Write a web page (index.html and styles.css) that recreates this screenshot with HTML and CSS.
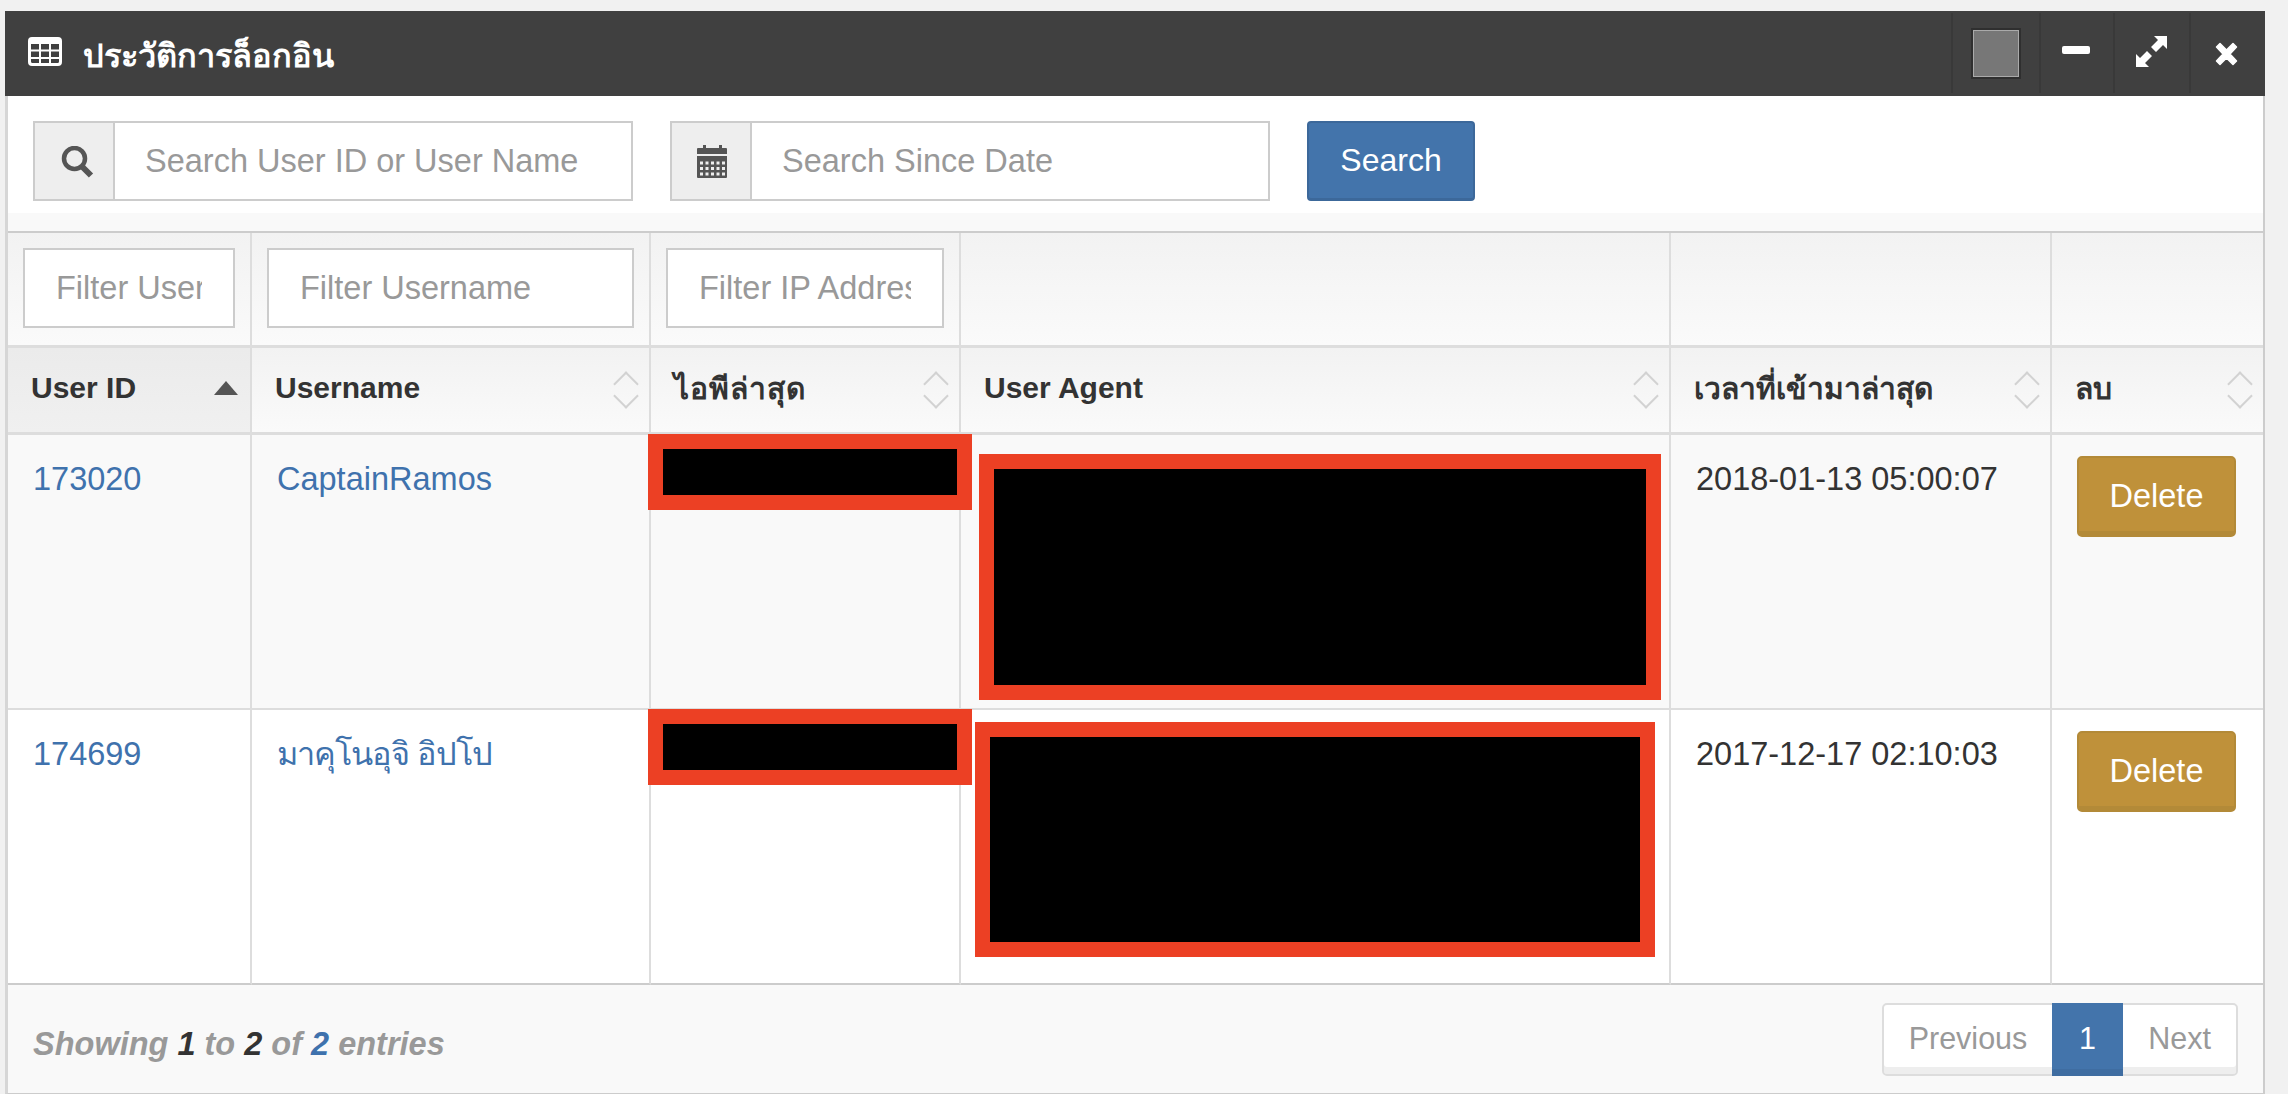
FILE: index.html
```html
<!DOCTYPE html>
<html lang="th">
<head>
<meta charset="utf-8">
<title>ประวัติการล็อกอิน</title>
<link rel="stylesheet" href="styles.css">
</head>
<body>
<section class="window">
  <header class="titlebar">
    <svg class="ico-table" viewBox="0 0 34 29"><path fill-rule="evenodd" fill="#fff" d="M4 0h26a4 4 0 0 1 4 4v21a4 4 0 0 1-4 4H4a4 4 0 0 1-4-4V4a4 4 0 0 1 4-4zM3 7v5.500h8V7zM13 7v5.500h8V7zM23 7v5.500h8V7zM3 14.500V20h8v-5.500zM13 14.500V20h8v-5.500zM23 14.500V20h8v-5.500zM3 22v2.500A1.500 1.500 0 0 0 4.500 26H11v-4zM13 22v4h8v-4zM23 22v4h6.500a1.500 1.500 0 0 0 1.500-1.500V22z"/></svg>
    <h1 class="title">ประวัติการล็อกอิน</h1>
    <div class="tools">
      <div class="tool tool-color"><span class="swatch"></span></div>
      <div class="tool tool-min"><span class="minus"></span></div>
      <div class="tool tool-exp"><svg class="ico-expand" viewBox="0 0 31 31"><path fill="#fff" d="M18 0H31V13L27 9 20 16 15 11 22 4ZM13 31H0V18L4 22 11 15 16 20 9 27Z"/></svg></div>
      <div class="tool tool-close"><svg class="ico-close" viewBox="0 0 23 24"><path fill="#fff" stroke="#fff" stroke-width="1.500" stroke-linejoin="round" d="M5 1.500 11.500 8 18 1.500 21.500 5 15 12 21.500 19 18 22.500 11.500 16 5 22.500 1.500 19 8 12 1.500 5Z"/></svg></div>
    </div>
  </header>
  <div class="panel">
    <form class="searchbar">
      <div class="group group-user">
        <span class="addon"><svg class="ico-search" viewBox="0 0 34 34"><circle cx="13.500" cy="12.500" r="10.500" fill="none" stroke="#555" stroke-width="4.500"/><path d="M21 20.500l9 9" fill="none" stroke="#555" stroke-width="6"/></svg></span>
        <input class="field" type="text" placeholder="Search User ID or User Name">
      </div>
      <div class="group group-date">
        <span class="addon"><svg class="ico-cal" viewBox="0 0 30 33"><path fill="#555" d="M6 0h3v3h13V0h3v3h4a1 1 0 0 1 1 1v5H0V4a1 1 0 0 1 1-1h5zM0 11h30v21a1 1 0 0 1-1 1H1a1 1 0 0 1-1-1z"/><path fill="#eee" d="M3 16.500h3v3H3zM8.500 16.500h3v3h-3zM14 16.500h3v3h-3zM19.500 16.500h3v3h-3zM25 16.500h3v3h-3zM3 22h3v3H3zM8.500 22h3v3h-3zM14 22h3v3h-3zM19.500 22h3v3h-3zM25 22h3v3h-3zM3 27.500h3v3H3zM8.500 27.500h3v3h-3zM14 27.500h3v3h-3zM19.500 27.500h3v3h-3zM25 27.500h3v3h-3z"/></svg></span>
        <input class="field" type="text" placeholder="Search Since Date">
      </div>
      <button class="btn btn-search" type="button">Search</button>
    </form>
    <div class="tablewrap">
    <table class="grid">
      <colgroup>
        <col class="c1"><col class="c2"><col class="c3"><col class="c4"><col class="c5"><col class="c6">
      </colgroup>
      <thead>
        <tr class="filters">
          <th><input class="filter" type="text" placeholder="Filter User ID"></th>
          <th><input class="filter" type="text" placeholder="Filter Username"></th>
          <th><input class="filter" type="text" placeholder="Filter IP Address"></th>
          <th></th><th></th><th></th>
        </tr>
        <tr class="heads">
          <th class="sorted"><span>User ID</span><i class="sort-asc"></i></th>
          <th><span>Username</span><i class="sort"></i></th>
          <th><span class="th-wide">ไอพีล่าสุด</span><i class="sort"></i></th>
          <th><span>User Agent</span><i class="sort"></i></th>
          <th><span>เวลาที่เข้ามาล่าสุด</span><i class="sort"></i></th>
          <th><span>ลบ</span><i class="sort"></i></th>
        </tr>
      </thead>
      <tbody>
        <tr class="odd">
          <td><a href="#">173020</a></td>
          <td><a href="#">CaptainRamos</a></td>
          <td class="hold"><div class="redact r-ip1"></div></td>
          <td class="hold"><div class="redact r-ua1"></div></td>
          <td>2018-01-13 05:00:07</td>
          <td class="act"><button class="btn btn-del" type="button">Delete</button></td>
        </tr>
        <tr>
          <td><a href="#">174699</a></td>
          <td><a class="th-name" href="#">มาคุโนอุจิ อิปโป</a></td>
          <td class="hold"><div class="redact r-ip2"></div></td>
          <td class="hold"><div class="redact r-ua2"></div></td>
          <td>2017-12-17 02:10:03</td>
          <td class="act"><button class="btn btn-del" type="button">Delete</button></td>
        </tr>
      </tbody>
    </table>
    </div>
    <footer class="foot">
      <p class="info">Showing <b>1</b> to <b>2</b> of <b class="blue">2</b> entries</p>
      <nav class="pager">
        <a class="pg pg-prev" href="#">Previous</a>
        <a class="pg pg-on" href="#">1</a>
        <a class="pg pg-next" href="#">Next</a>
      </nav>
    </footer>
  </div>
</section>
</body>
</html>
```
FILE: styles.css
```css
* { box-sizing: border-box; }
html, body { height: 100%; }
body {
  margin: 0;
  overflow: hidden;
  background: #f1f1f1;
  color: #333;
  font-family: "Liberation Sans", "Noto Sans", sans-serif;
  font-size: 32.5px;
}
.window { margin: 11px 23px 0 5px; }

/* title bar */
.titlebar {
  height: 85px;
  background: #404040;
  display: flex;
  align-items: center;
  color: #fff;
}
.ico-table { width: 34px; height: 29px; margin: 0 21px 0 23px; position: relative; top: -2px; flex: none; }
.title { margin: 0; font-size: 32.5px; font-weight: bold; line-height: 1; position: relative; top: 3px; }
.tools { margin-left: auto; display: flex; height: 80px; align-self: flex-start; margin-top: 2px; }
.tool { border-left: 2px solid #393939; display: flex; align-items: center; justify-content: center; }
.tool-color { width: 88px; }
.tool-min { width: 74px; }
.tool-exp { width: 76px; }
.tool-close { width: 76px; }
.swatch { width: 48px; height: 49px; background: #777; border: 2px solid #aaa; outline: 2px solid #2f2f2f; outline-offset: -1px; }
.minus { width: 28px; height: 8px; background: #fff; border-radius: 2px; position: relative; top: -3px; left: -1px; }
.ico-expand { width: 31px; height: 31px; position: relative; top: -2px; left: -1px; }
.ico-close { width: 23px; height: 24px; position: relative; top: 1px; left: -2px; }

.panel {
  background: #fff;
  border-left: 3px solid #d6d6d6;
  border-right: 2px solid #ccc;
  border-bottom: 1px solid #ccc;
  height: 998px;
  display: flex;
  flex-direction: column;
}

/* search */
.searchbar { display: flex; gap: 37px; padding: 25px 0 12px 25px; flex: none; }
.group { display: flex; height: 80px; border: 2px solid #ccc; }
.group-user { width: 600px; }
.group-date { width: 600px; }
.addon { width: 80px; flex: none; background: #eee; border-right: 2px solid #ccc; display: flex; align-items: center; justify-content: center; }
.ico-search { width: 34px; height: 34px; margin: 4px 0 0 7px; }
.ico-cal { width: 30px; height: 33px; margin-left: 2px; }
.field {
  flex: 1;
  min-width: 0;
  border: 0;
  padding: 0 30px;
  font: inherit;
  color: #333;
  background: #fff;
  outline: none;
}
::placeholder { color: #999; opacity: 1; }

.btn { font: inherit; color: #fff; cursor: pointer; padding: 0; }
.btn-search { width: 168px; height: 80px; font-size: 32px; background: #4374ab; border: 2px solid #3c689a; border-bottom-width: 3px; border-radius: 4px; }

/* table */
.tablewrap { padding-top: 18px; background: #f9f9f9; flex: none; }
.grid { width: 100%; table-layout: fixed; border-collapse: separate; border-spacing: 0; border-top: 2px solid #ccc; }
.c1 { width: 244px; }
.c2 { width: 399px; }
.c3 { width: 310px; }
.c4 { width: 710px; }
.c5 { width: 381px; }
.c6 { width: 211px; }
th, td { border-right: 2px solid #ddd; padding: 0; text-align: left; }
th:last-child, td:last-child { border-right: 0; }
.filters th { height: 115px; border-bottom: 3px solid #ddd; padding: 15px 15px 17px 15px; background: linear-gradient(#f2f2f2, #fafafa); vertical-align: top; }
.filter { width: 100%; height: 80px; display: block; border: 2px solid #ccc; padding: 0 31px; font: inherit; font-weight: normal; background: #fff; outline: none; }
.heads th { height: 87px; border-bottom: 3px solid #ddd; padding: 0 23px; background: linear-gradient(#f2f2f2, #fafafa); position: relative; font-size: 30px; font-weight: bold; vertical-align: middle; }
.heads th.sorted { background: linear-gradient(#ebebeb, #f0f0f0); }
.heads th span { position: relative; top: -2px; }
.heads th .th-wide { letter-spacing: 1px; }
.sort, .sort-asc { position: absolute; display: block; }
.sort { right: 12px; top: 24px; width: 24px; height: 36px; }
.sort::before, .sort::after { content: ""; position: absolute; left: 4px; width: 16px; height: 16px; border: solid #d2d2d2; border-width: 2px 0 0 2px; }
.sort::before { top: 3px; transform: rotate(45deg); }
.sort::after { bottom: 3px; transform: rotate(225deg); }
.sort-asc { right: 12px; top: 33px; width: 0; height: 0; border-left: 12px solid transparent; border-right: 12px solid transparent; border-bottom: 14px solid #555; }

td { height: 275px; border-bottom: 2px solid #ddd; padding: 22px 25px 0; vertical-align: top; line-height: 44px; background: #fff; }
tbody tr:last-child td { border-bottom-color: #ccc; }
.odd td { background: #f9f9f9; }
a { color: #3f72ad; text-decoration: none; }
.th-name { letter-spacing: -1px; }
.hold { position: relative; padding: 0; }
.redact { position: absolute; background: #000; border: 15px solid #ec4024; }
.r-ip1 { left: -3px; top: -1px; width: 324px; height: 76px; z-index: 1; }
.r-ip2 { left: -3px; top: -1px; width: 324px; height: 76px; z-index: 1; }
.r-ua1 { left: 18px; top: 19px; width: 682px; height: 246px; }
.r-ua2 { left: 14px; top: 12px; width: 680px; height: 235px; }
.act { padding: 21px 0 0 25px; }
.btn-del { display: block; width: 159px; height: 81px; background: #bf913a; border: 2px solid #b38a38; border-bottom-width: 6px; border-radius: 5px; padding-top: 2px; }

/* footer */
.foot { flex: 1; background: #f9f9f9; display: flex; justify-content: space-between; align-items: flex-start; padding: 18px 25px 0 25px; }
.info { margin: 0; padding-top: 19px; font-size: 32.5px; font-weight: bold; font-style: italic; color: #999; line-height: 44px; }
.info b { color: #333; }
.info b.blue { color: #3f72ad; }
.pager { display: flex; height: 73px; border: 2px solid #ddd; border-radius: 5px; background: #fff; box-shadow: inset 0 -7px 0 #eee; font-size: 30.5px; }
.pg { display: flex; align-items: center; justify-content: center; color: #999; padding-bottom: 2px; }
.pg-prev { width: 168px; }
.pg-on { width: 71px; margin: -2px 0; background: #4374ab; color: #fff; box-shadow: inset 0 -7px 0 #3f6da1; }
.pg-next { width: 113px; }
```
